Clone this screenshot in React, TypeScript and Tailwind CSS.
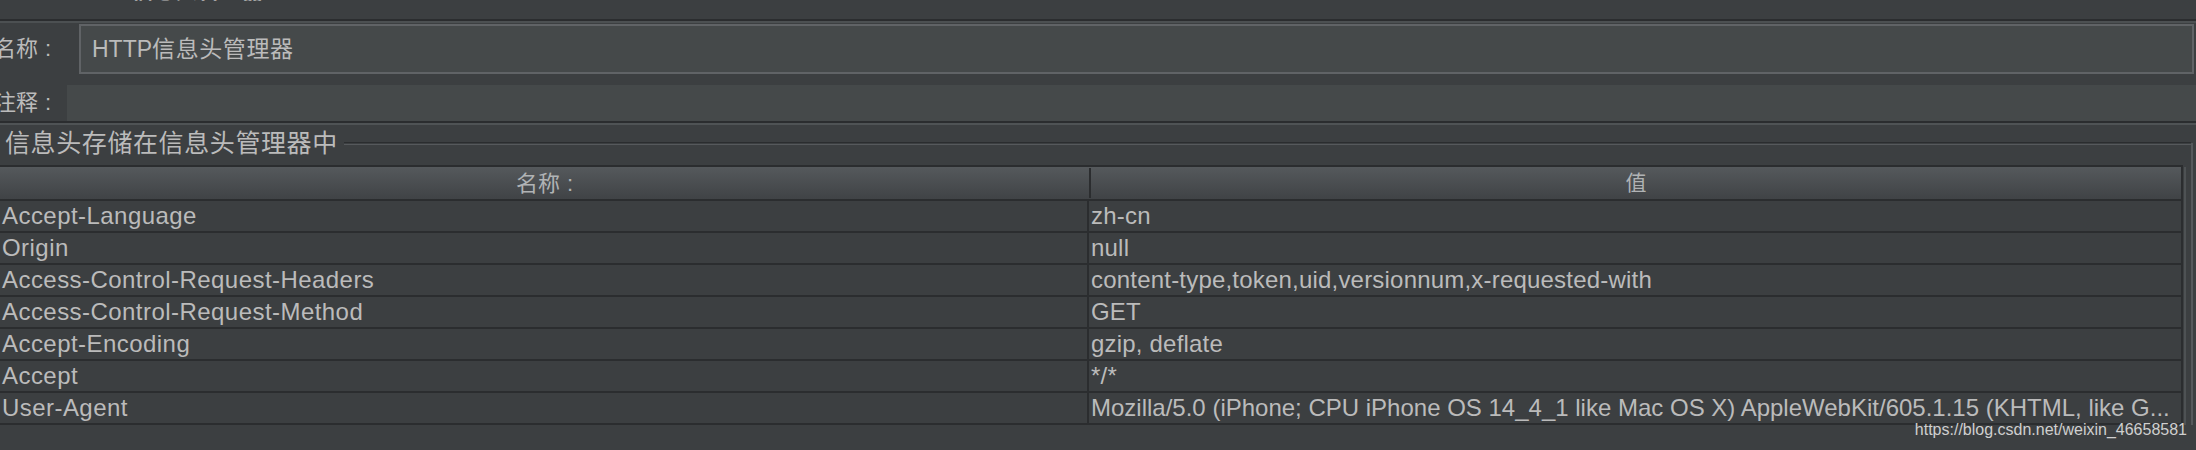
const headers: [string, string][] = [
  ['Accept-Language', 'zh-cn'],
  ['Origin', 'null'],
  ['Access-Control-Request-Headers', 'content-type,token,uid,versionnum,x-requested-with'],
  ['Access-Control-Request-Method', 'GET'],
  ['Accept-Encoding', 'gzip, deflate'],
  ['Accept', '*/*'],
  [
    'User-Agent',
    'Mozilla/5.0 (iPhone; CPU iPhone OS 14_4_1 like Mac OS X) AppleWebKit/605.1.15 (KHTML, like G...',
  ],
]

function Label({ text }: { text: string }) {
  return (
    <span className="-ml-[6px] flex items-center whitespace-nowrap text-[22px] leading-[26px]">
      {text}
      <span className="ml-[7px]">:</span>
    </span>
  )
}

export default function App() {
  return (
    <div className="relative h-[450px] w-[2196px] overflow-hidden bg-[#3c3f41] font-['Liberation_Sans','Noto_Sans_CJK_SC',sans-serif] text-[#bbbbbb]">
      {/* title bar, mostly scrolled off */}
      <div className="h-[19px] overflow-hidden">
        <div className="-mt-[21px] whitespace-nowrap pl-[74px] text-[22px] leading-[24px] font-bold">
          HTTP信息头管理器
        </div>
      </div>
      <div className="h-[2px] bg-[#2b2d2f]" />
      <div className="h-[2px] bg-[#4c5052]" />
      <div className="h-px" />

      {/* name */}
      <div className="flex h-[50px] items-center">
        <div className="flex w-[79px] shrink-0">
          <Label text="名称" />
        </div>
        <div className="mr-[2px] flex h-full flex-1 items-center border-2 border-[#606366] bg-[#45494a] pl-[11px]">
          <span className="text-[23px]">HTTP</span>
          <span className="text-[23px] tracking-[0.6px]">信息头管理器</span>
        </div>
      </div>

      <div className="h-[11px]" />

      {/* comment */}
      <div className="flex h-[36px] items-center">
        <div className="flex w-[67px] shrink-0">
          <Label text="注释" />
        </div>
        <div className="h-full flex-1 bg-[#45494a]" />
      </div>
      <div className="h-[2px] bg-[#2b2d2f]" />
      <div className="h-[2px] bg-[#4f5355]" />

      {/* titled group */}
      <div className="flex h-[36px] items-center">
        <span className="whitespace-nowrap pl-[5px] text-[25px] leading-[30px] tracking-[0.6px]">
          信息头存储在信息头管理器中
        </span>
        <div className="ml-[6px] flex flex-1 flex-col">
          <div className="h-px bg-[#2b2d2f]" />
          <div className="mt-px h-px bg-[#56595c]" />
        </div>
        <div className="h-[18px] w-[2px] self-end bg-[#56595c]" />
        <div className="w-[3px]" />
      </div>

      <div className="flex">
        <div className="w-[2183px] shrink-0 pt-[4px]">
          <div className="border-t-2 border-r-2 border-[#2b2d2f]">
            <div className="flex h-[34px] items-center border-b-2 border-[#2b2d2f] bg-gradient-to-b from-[#55595c] to-[#404346] text-[22px] text-[#b0b3b5]">
              <div className="flex w-[1089px] justify-center">
                名称<span className="ml-[7px]">:</span>
              </div>
              <div className="h-[30px] w-[2px] bg-[#2b2d2f]" />
              <div className="flex-1 text-center text-[21px]">值</div>
            </div>
            {headers.map(([name, value]) => (
              <div key={name} className="flex h-[32px] border-b-2 border-[#2b2d2f] text-[24px] leading-[30px]">
                <div className="w-[1089px] shrink-0 overflow-hidden whitespace-nowrap border-r-2 border-[#2b2d2f] pl-[2px] tracking-[0.45px]">
                  {name}
                </div>
                <div
                  className={`flex-1 overflow-hidden whitespace-nowrap pl-[2px] ${
                    name === 'User-Agent' ? 'tracking-normal' : 'tracking-[0.2px]'
                  }`}
                >
                  {value}
                </div>
              </div>
            ))}
          </div>
        </div>
        <div className="w-px" />
        <div className="mt-[6px] w-[2px] bg-[#4e5254]" />
        <div className="w-[5px]" />
        <div className="w-[2px] bg-[#56595c]" />
      </div>

      <div className="absolute right-[9px] top-[421px] whitespace-nowrap text-[16px] leading-[18px] text-[#cfcfcf]">
        https://blog.csdn.net/weixin_46658581
      </div>
    </div>
  )
}
